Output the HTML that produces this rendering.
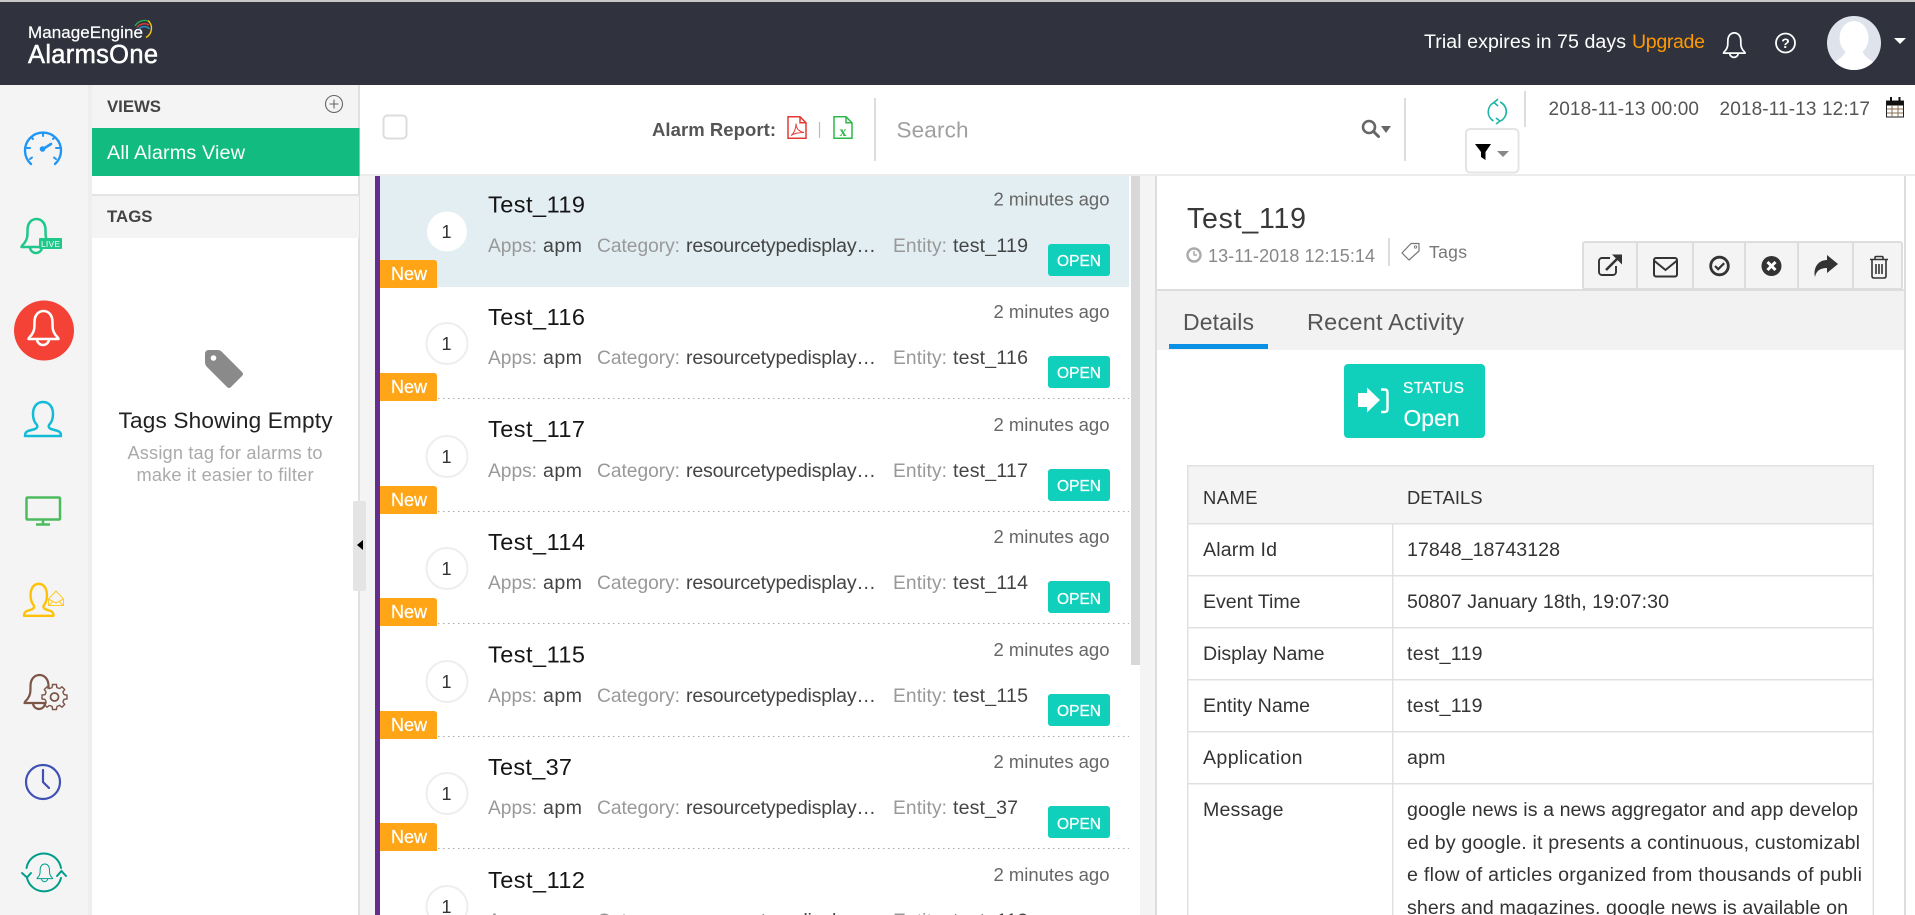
<!DOCTYPE html>
<html lang="en">
<head>
<meta charset="utf-8">
<title>AlarmsOne</title>
<style>
html,body{margin:0;padding:0;width:1915px;height:915px;overflow:hidden;background:#fff}
svg{display:block;font-family:"Liberation Sans",Arial,sans-serif}
.t{font-size:23.5px;fill:#151515}
.g{font-size:19.200px;fill:#999}
.v{font-size:19.600px;fill:#444}
.tm{font-size:18.500px;fill:#666}
.nw{font-size:18px;fill:#fff;stroke:#fff;stroke-width:.25px}
.op{font-size:15.500px;fill:#fff;stroke:#fff;stroke-width:.25px}
.n{font-size:18px;fill:#333}
.c{font-size:19.600px;fill:#333}
.h{font-size:18.400px;fill:#333}
</style>
</head>
<body>
<svg xmlns="http://www.w3.org/2000/svg" width="1915" height="915" viewBox="0 0 1915 915">
<clipPath id="av"><circle cx="1854" cy="43" r="27"/></clipPath>
<rect width="1915" height="915" fill="#fff"/>

<!-- header -->
<rect width="1915" height="2" fill="#c8c8c8"/>
<rect y="2" width="1915" height="83" fill="#30333d"/>
<text x="28" y="38" font-size="17" fill="#fff" stroke="#fff" stroke-width=".2" textLength="115">ManageEngine</text>
<text x="28" y="63" font-size="25.500" fill="#fff" stroke="#fff" stroke-width=".5" textLength="130">AlarmsOne</text>
<g fill="none" stroke-width="1.400">
<path d="M148 20.500A10.500 10.500 0 0 1 146 37.500" stroke="#f5c518"/>
<path d="M135 26A11 11 0 0 1 148 21" stroke="#2aa84a"/>
<path d="M137 27.500A9 9 0 0 1 149 25" stroke="#e03a3a"/>
<path d="M139 29A7 7 0 0 1 149.500 29" stroke="#2a8fc9"/>
</g>
<text x="1424" y="48" font-size="19.600" fill="#fff" textLength="202">Trial expires in 75 days</text>
<text x="1632" y="48" font-size="19.600" fill="#ff9800" textLength="73">Upgrade</text>
<g transform="translate(1703 -191) scale(.72)" fill="none" stroke="#fff" stroke-width="2.400" stroke-linejoin="round">
<path d="M28.500 339c0-1 1-2 3-4c3-4 3-7 3-13c0-7 4-11 9-11s9 4 9 11c0 6 0 9 3 13c2 2 3 3 3 4z"/>
<path d="M37 339a6 6 0 0 0 12 0"/>
</g>
<circle cx="1785.500" cy="43" r="9.500" fill="none" stroke="#fff" stroke-width="1.800"/>
<text x="1785.500" y="48" font-size="14" font-weight="bold" fill="#fff" text-anchor="middle">?</text>
<circle cx="1854" cy="43" r="27" fill="#dfe3ec"/>
<g clip-path="url(#av)" fill="#fff">
<ellipse cx="1854" cy="38" rx="14.500" ry="17"/>
<path d="M1826 72C1828 62 1843 61 1846 50L1862 50C1865 61 1880 62 1882 72Z"/>
</g>
<polygon points="1894,38 1906,38 1900,44" fill="#fff"/>

<!-- left rail -->
<rect y="85" width="88" height="830" fill="#f4f4f4"/>
<rect x="88" y="85" width="4" height="830" fill="#eee"/>

<!-- gauge -->
<g fill="none" stroke="#2196f3" stroke-width="2.400" stroke-linecap="round">
<path d="M31 164A18 18 0 1 1 55 164"/>
<path d="M43 133v3M31 137l2 2M55 137l-2 2M27 148h3M59 148h-3M30 159l2-1.500M56 159l-2-1.500" stroke-width="2"/>
<path d="M43 149L51 144" stroke-width="2.600"/>
<circle cx="42.500" cy="149" r="1.600" fill="#2196f3"/>
</g>

<!-- live bell -->
<g transform="translate(-7 -92)" fill="none" stroke="#1fc88a" stroke-width="2.500" stroke-linejoin="round">
<path d="M28.500 339c0-1 1-2 3-4c3-4 3-7 3-13c0-7 4-11 9-11s9 4 9 11c0 6 0 9 3 13c2 2 3 3 3 4z"/>
<path d="M37 339a6 6 0 0 0 12 0"/>
</g>
<rect x="39" y="238" width="23" height="11" rx="1" fill="#1fc88a"/>
<text x="41" y="247" font-size="8.500" fill="#fff" textLength="19">LIVE</text>

<!-- alarms -->
<circle cx="44" cy="330.500" r="30" fill="#f44336"/>
<g fill="none" stroke="#fff" stroke-width="2.500" stroke-linejoin="round">
<path d="M28.500 339c0-1 1-2 3-4c3-4 3-7 3-13c0-7 4-11 9-11s9 4 9 11c0 6 0 9 3 13c2 2 3 3 3 4z"/>
<path d="M37 339a6 6 0 0 0 12 0"/>
</g>

<!-- user -->
<path d="M43 402c-7 0-10 6-10 12c0 5 2 9 4 11c1 2 0 3-2 4l-7 2c-2 1-3 2-3 5h36c0-3-1-4-3-5l-7-2c-2-1-3-2-2-4c2-2 4-6 4-11c0-6-3-12-10-12z" fill="none" stroke="#12bcd8" stroke-width="2.500" stroke-linejoin="round"/>

<!-- monitor -->
<g fill="none" stroke="#4cbb5e" stroke-width="2.500">
<rect x="26.500" y="497.500" width="33.500" height="22" rx="1"/>
<path d="M43 519v6M36 524.500h14"/>
</g>

<!-- yellow user + mail -->
<path transform="translate(3.500 206) scale(.82 .94)" vector-effect="non-scaling-stroke" d="M43 402c-7 0-10 6-10 12c0 5 2 9 4 11c1 2 0 3-2 4l-7 2c-2 1-3 2-3 5h36c0-3-1-4-3-5l-7-2c-2-1-3-2-2-4c2-2 4-6 4-11c0-6-3-12-10-12z" fill="none" stroke="#ffc107" stroke-width="2.400" stroke-linejoin="round"/>
<g fill="none" stroke="#ffca28" stroke-width="1">
<path d="M48.500 599L56 591L63.500 599V605.500H48.500Z"/>
<path d="M48.500 599L56 603L63.500 599M48.500 605.500L53 601.500M63.500 605.500L59 601.500"/>
</g>

<!-- bell gear -->
<g transform="translate(-4 364)" fill="none" stroke="#7b5548" stroke-width="2.200" stroke-linejoin="round">
<path d="M28.500 339c0-1 1-2 3-4c3-4 3-7 3-13c0-7 4-11 9-11s9 4 9 11c0 6 0 9 3 13c2 2 3 3 3 4z"/>
<path d="M37 339a6 6 0 0 0 12 0"/>
</g>
<circle cx="54" cy="697" r="10" fill="#f4f4f4"/>
<g transform="translate(54.500 697)" fill="none" stroke="#7b5548" stroke-width="1.400" stroke-linejoin="round">
<path d="M-2.300 -9.500L-2 -12.500H2L2.300 -9.500L5.090 -8.340"/>
<path transform="rotate(45)" d="M-2.300 -9.500L-2 -12.500H2L2.300 -9.500L5.090 -8.340"/>
<path transform="rotate(90)" d="M-2.300 -9.500L-2 -12.500H2L2.300 -9.500L5.090 -8.340"/>
<path transform="rotate(135)" d="M-2.300 -9.500L-2 -12.500H2L2.300 -9.500L5.090 -8.340"/>
<path transform="rotate(180)" d="M-2.300 -9.500L-2 -12.500H2L2.300 -9.500L5.090 -8.340"/>
<path transform="rotate(225)" d="M-2.300 -9.500L-2 -12.500H2L2.300 -9.500L5.090 -8.340"/>
<path transform="rotate(270)" d="M-2.300 -9.500L-2 -12.500H2L2.300 -9.500L5.090 -8.340"/>
<path transform="rotate(315)" d="M-2.300 -9.500L-2 -12.500H2L2.300 -9.500L5.090 -8.340"/>
<circle r="4" stroke-width="1.800"/>
</g>

<!-- clock -->
<g fill="none" stroke="#3f51b5" stroke-width="2.200" stroke-linecap="round">
<circle cx="43" cy="782" r="17"/>
<path d="M43 770V782L49 788"/>
</g>

<!-- sync bell -->
<g fill="none" stroke="#009e8a" stroke-width="2" stroke-linecap="round">
<path d="M26.500 868A17.500 17.500 0 0 1 61 868"/>
<path d="M27 878A17.500 17.500 0 0 0 61 878"/>
<path d="M22 873L27 877.500L31 873M57 876L61.500 871L66 876"/>
</g>
<g transform="translate(22.200 702.300) scale(.52)" fill="none" stroke="#009e8a" stroke-width="1.900">
<path d="M28.500 339c0-1 1-2 3-4c3-4 3-7 3-13c0-7 4-11 9-11s9 4 9 11c0 6 0 9 3 13c2 2 3 3 3 4z"/>
<path d="M37 339a6 6 0 0 0 12 0"/>
</g>

<!-- gutter -->
<rect x="360" y="176" width="15" height="739" fill="#f4f4f4"/>
<rect x="375" y="176" width="5" height="739" fill="#662d91"/>

<!-- views panel -->
<rect x="92" y="85" width="267" height="43" fill="#f4f4f4"/>
<rect x="358" y="85" width="2" height="830" fill="#e0e0e0"/>
<rect x="92" y="128" width="267.500" height="48" fill="#12bc80"/>
<rect x="92" y="194" width="267" height="2" fill="#e4e4e4"/>
<rect x="92" y="196" width="267" height="42" fill="#f4f4f4"/>
<text x="107" y="112" font-size="16.800" font-weight="bold" fill="#444" textLength="54">VIEWS</text>
<text x="107" y="222" font-size="16.800" font-weight="bold" fill="#444" textLength="45.500">TAGS</text>
<text x="107" y="159" font-size="19.800" fill="#fff" textLength="138">All Alarms View</text>
<circle cx="334" cy="104" r="8.500" fill="none" stroke="#666" stroke-width="1.100"/>
<path d="M334 99.500v9M329.500 104h9" stroke="#666" stroke-width="1.100"/>
<path d="M209 350H218Q220 350 222 352L242 372Q244 374 242 376L231 387Q229 389 227 387L207 367Q205 365 205 362V354Q205 350 209 350Z" fill="#8a8a8a"/>
<circle cx="213.500" cy="358" r="2.800" fill="#fff"/>
<text x="225.500" y="428" font-size="22.600" fill="#222" text-anchor="middle" textLength="214">Tags Showing Empty</text>
<text x="225" y="459" font-size="18.200" fill="#aaa" text-anchor="middle" textLength="195">Assign tag for alarms to</text>
<text x="225" y="481" font-size="18.200" fill="#aaa" text-anchor="middle" textLength="177">make it easier to filter</text>
<rect x="353" y="501" width="13" height="90" rx="2" fill="#e4e4e4"/>
<polygon points="363,540 363,550 357,545" fill="#000"/>

<!-- toolbar -->
<rect x="360" y="174" width="1555" height="2" fill="#ececec"/>
<rect x="383.500" y="115.500" width="23" height="23" rx="4" fill="#fff" stroke="#ddd" stroke-width="2"/>
<text x="652" y="136" font-size="18.500" font-weight="bold" fill="#555" textLength="124">Alarm Report:</text>
<g fill="none" stroke="#e53935" stroke-width="1.500">
<path d="M788 116.800h12l6 6v15.500h-18z"/>
<path d="M800 116.800v6h6"/>
<path d="M791 135.500c3-2 5-7 5-12c0 5 3 8 8 9c-5 0-10 1-13 3z" stroke-width="1"/>
</g>
<path d="M819.500 122v16" stroke="#bbb" stroke-width="1.200"/>
<g fill="none" stroke="#2db84a" stroke-width="1.500">
<path d="M834 116.800h12l6 6v15.500h-18z"/>
<path d="M846 116.800v6h6"/>
</g>
<text x="843" y="136" font-size="14" font-family="Liberation Serif,serif" font-weight="bold" fill="#2db84a" text-anchor="middle">x</text>
<rect x="874" y="98" width="2" height="63" fill="#ddd"/>
<text x="896.500" y="137.500" font-size="22.500" fill="#a0a0a0" textLength="72">Search</text>
<circle cx="1369" cy="127" r="6" fill="none" stroke="#666" stroke-width="2.600"/>
<path d="M1373.500 131.500L1378.500 136.500" stroke="#666" stroke-width="3" stroke-linecap="round"/>
<polygon points="1381,126 1391,126 1386,133" fill="#666"/>
<rect x="1404" y="98" width="2" height="63" fill="#ddd"/>
<g fill="none" stroke="#1ab5a5" stroke-width="1.600">
<path d="M1494 102.500A10.500 10.500 0 0 0 1493.500 121"/>
<path d="M1500 102A10.500 10.500 0 0 1 1500.500 121"/>
<path d="M1498 99L1494 102.500L1498 106"/>
<path d="M1496 118L1500 121L1496 124"/>
</g>
<rect x="1524" y="91" width="2" height="36" fill="#ddd"/>
<text x="1548.500" y="115" font-size="19" fill="#555" textLength="150.500">2018-11-13 00:00</text>
<text x="1719.500" y="115" font-size="19" fill="#555" textLength="150.500">2018-11-13 12:17</text>
<rect x="1886.500" y="101" width="17" height="16" fill="#fff" stroke="#222" stroke-width="1"/>
<rect x="1886.500" y="101" width="17" height="4.500" fill="#111"/>
<path d="M1891 97v5M1899.500 97v5" stroke="#111" stroke-width="2"/>
<path d="M1892 105v12M1898 105v12M1887 109h16M1887 113h16" stroke="#8a6d50" stroke-width="1"/>
<rect x="1466" y="129" width="52.500" height="43.500" rx="4" fill="#fff" stroke="#e4e4e4" stroke-width="2"/>
<polygon points="1475,144 1491,144 1485.500,152 1485.500,160 1481,157 1481,152" fill="#000"/>
<polygon points="1497,151 1509,151 1503,157" fill="#888"/>

<!-- list -->
<rect x="380" y="176" width="749" height="111" fill="#e2eef2"/>
<rect x="1131" y="176" width="9" height="489" fill="#d8d8d8"/>
<rect x="1140" y="176" width="15" height="739" fill="#f4f4f4"/>

<g transform="translate(0 176)">
<circle cx="447" cy="55.500" r="20" fill="#fff"/>
<text class="n" x="446.500" y="62" text-anchor="middle">1</text>
<text class="t" x="488" y="36.500" textLength="97">Test_119</text>
<text class="tm" x="993.500" y="29.500" textLength="116">2 minutes ago</text>
<text class="g" x="488" y="76" textLength="49">Apps:</text><text class="v" x="543" y="76" textLength="39">apm</text>
<text class="g" x="597" y="76" textLength="83">Category:</text><text class="v" x="686" y="76" textLength="190">resourcetypedisplay…</text>
<text class="g" x="893" y="76" textLength="54">Entity:</text><text class="v" x="953" y="76" textLength="75">test_119</text>
<rect x="1048" y="68" width="62" height="32" rx="3" fill="#10d0bc"/>
<text class="op" x="1057" y="90" textLength="44">OPEN</text>
<path d="M380 84H434Q437 84 437 87V112H380Z" fill="#ffa516"/>
<text class="nw" x="391" y="104" textLength="36">New</text>
</g>

<g transform="translate(0 288)">
<circle cx="447" cy="55.500" r="20.500" fill="#fff" stroke="#eee" stroke-width="2"/>
<text class="n" x="446.500" y="62" text-anchor="middle">1</text>
<text class="t" x="488" y="37" textLength="97">Test_116</text>
<text class="tm" x="993.500" y="30" textLength="116">2 minutes ago</text>
<text class="g" x="488" y="76" textLength="49">Apps:</text><text class="v" x="543" y="76" textLength="39">apm</text>
<text class="g" x="597" y="76" textLength="83">Category:</text><text class="v" x="686" y="76" textLength="190">resourcetypedisplay…</text>
<text class="g" x="893" y="76" textLength="54">Entity:</text><text class="v" x="953" y="76" textLength="75">test_116</text>
<rect x="1048" y="68" width="62" height="32" rx="3" fill="#10d0bc"/>
<text class="op" x="1057" y="90" textLength="44">OPEN</text>
<path d="M438 110.500H1129" stroke="#aaa" stroke-width="1" stroke-dasharray="1.500 3.500"/>
<path d="M380 85H434Q437 85 437 88V113H380Z" fill="#ffa516"/>
<text class="nw" x="391" y="105" textLength="36">New</text>
</g>

<g transform="translate(0 401)">
<circle cx="447" cy="55.500" r="20.500" fill="#fff" stroke="#eee" stroke-width="2"/>
<text class="n" x="446.500" y="62" text-anchor="middle">1</text>
<text class="t" x="488" y="36" textLength="97">Test_117</text>
<text class="tm" x="993.500" y="30" textLength="116">2 minutes ago</text>
<text class="g" x="488" y="76" textLength="49">Apps:</text><text class="v" x="543" y="76" textLength="39">apm</text>
<text class="g" x="597" y="76" textLength="83">Category:</text><text class="v" x="686" y="76" textLength="190">resourcetypedisplay…</text>
<text class="g" x="893" y="76" textLength="54">Entity:</text><text class="v" x="953" y="76" textLength="75">test_117</text>
<rect x="1048" y="68" width="62" height="32" rx="3" fill="#10d0bc"/>
<text class="op" x="1057" y="90" textLength="44">OPEN</text>
<path d="M438 110.500H1129" stroke="#aaa" stroke-width="1" stroke-dasharray="1.500 3.500"/>
<path d="M380 85H434Q437 85 437 88V113H380Z" fill="#ffa516"/>
<text class="nw" x="391" y="105" textLength="36">New</text>
</g>

<g transform="translate(0 513)">
<circle cx="447" cy="55.500" r="20.500" fill="#fff" stroke="#eee" stroke-width="2"/>
<text class="n" x="446.500" y="62" text-anchor="middle">1</text>
<text class="t" x="488" y="37" textLength="97">Test_114</text>
<text class="tm" x="993.500" y="30" textLength="116">2 minutes ago</text>
<text class="g" x="488" y="76" textLength="49">Apps:</text><text class="v" x="543" y="76" textLength="39">apm</text>
<text class="g" x="597" y="76" textLength="83">Category:</text><text class="v" x="686" y="76" textLength="190">resourcetypedisplay…</text>
<text class="g" x="893" y="76" textLength="54">Entity:</text><text class="v" x="953" y="76" textLength="75">test_114</text>
<rect x="1048" y="68" width="62" height="32" rx="3" fill="#10d0bc"/>
<text class="op" x="1057" y="91" textLength="44">OPEN</text>
<path d="M438 110.500H1129" stroke="#aaa" stroke-width="1" stroke-dasharray="1.500 3.500"/>
<path d="M380 85H434Q437 85 437 88V113H380Z" fill="#ffa516"/>
<text class="nw" x="391" y="105" textLength="36">New</text>
</g>

<g transform="translate(0 626)">
<circle cx="447" cy="55.500" r="20.500" fill="#fff" stroke="#eee" stroke-width="2"/>
<text class="n" x="446.500" y="62" text-anchor="middle">1</text>
<text class="t" x="488" y="36.500" textLength="97">Test_115</text>
<text class="tm" x="993.500" y="30" textLength="116">2 minutes ago</text>
<text class="g" x="488" y="76" textLength="49">Apps:</text><text class="v" x="543" y="76" textLength="39">apm</text>
<text class="g" x="597" y="76" textLength="83">Category:</text><text class="v" x="686" y="76" textLength="190">resourcetypedisplay…</text>
<text class="g" x="893" y="76" textLength="54">Entity:</text><text class="v" x="953" y="76" textLength="75">test_115</text>
<rect x="1048" y="68" width="62" height="32" rx="3" fill="#10d0bc"/>
<text class="op" x="1057" y="90" textLength="44">OPEN</text>
<path d="M438 110.500H1129" stroke="#aaa" stroke-width="1" stroke-dasharray="1.500 3.500"/>
<path d="M380 85H434Q437 85 437 88V113H380Z" fill="#ffa516"/>
<text class="nw" x="391" y="105" textLength="36">New</text>
</g>

<g transform="translate(0 738)">
<circle cx="447" cy="55.500" r="20.500" fill="#fff" stroke="#eee" stroke-width="2"/>
<text class="n" x="446.500" y="62" text-anchor="middle">1</text>
<text class="t" x="488" y="37" textLength="84">Test_37</text>
<text class="tm" x="993.500" y="30" textLength="116">2 minutes ago</text>
<text class="g" x="488" y="76" textLength="49">Apps:</text><text class="v" x="543" y="76" textLength="39">apm</text>
<text class="g" x="597" y="76" textLength="83">Category:</text><text class="v" x="686" y="76" textLength="190">resourcetypedisplay…</text>
<text class="g" x="893" y="76" textLength="54">Entity:</text><text class="v" x="953" y="76" textLength="65">test_37</text>
<rect x="1048" y="68" width="62" height="32" rx="3" fill="#10d0bc"/>
<text class="op" x="1057" y="91" textLength="44">OPEN</text>
<path d="M438 110.500H1129" stroke="#aaa" stroke-width="1" stroke-dasharray="1.500 3.500"/>
<path d="M380 85H434Q437 85 437 88V113H380Z" fill="#ffa516"/>
<text class="nw" x="391" y="105" textLength="36">New</text>
</g>

<g transform="translate(0 851)">
<circle cx="447" cy="55.500" r="20.500" fill="#fff" stroke="#eee" stroke-width="2"/>
<text class="n" x="446.500" y="62" text-anchor="middle">1</text>
<text class="t" x="488" y="37" textLength="97">Test_112</text>
<text class="tm" x="993.500" y="30" textLength="116">2 minutes ago</text>
<text class="g" x="488" y="76" textLength="49">Apps:</text><text class="v" x="543" y="76" textLength="39">apm</text>
<text class="g" x="597" y="76" textLength="83">Category:</text><text class="v" x="686" y="76" textLength="190">resourcetypedisplay…</text>
<text class="g" x="893" y="76" textLength="54">Entity:</text><text class="v" x="953" y="76" textLength="75">test_112</text>
</g>

<!-- right panel -->
<rect x="1155" y="176" width="2" height="739" fill="#ddd"/>
<rect x="1904" y="176" width="2" height="739" fill="#ddd"/>
<rect x="1157" y="289" width="747" height="2" fill="#ddd"/>
<rect x="1157" y="291" width="747" height="59" fill="#f2f2f2"/>
<rect x="1169" y="344" width="99" height="5" fill="#0a90e4"/>
<text x="1187" y="228" font-size="28.500" fill="#383838" textLength="119">Test_119</text>
<circle cx="1194" cy="255" r="6.500" fill="none" stroke="#aaa" stroke-width="2.400"/>
<path d="M1194 251v4h3" fill="none" stroke="#aaa" stroke-width="1.500"/>
<text x="1208" y="262" font-size="18" fill="#888" textLength="167">13-11-2018 12:15:14</text>
<rect x="1388" y="238" width="2" height="28" fill="#ddd"/>
<path d="M1402 253L1411 243.500H1419V251L1409 260Z" fill="none" stroke="#777" stroke-width="1.200" stroke-linejoin="round"/>
<circle cx="1415.500" cy="247" r="1.200" fill="none" stroke="#777" stroke-width=".9"/>
<text x="1429" y="258" font-size="17.500" fill="#777" textLength="38">Tags</text>
<text x="1183" y="330" font-size="23" fill="#555" textLength="71">Details</text>
<text x="1307" y="330" font-size="23.500" fill="#555" textLength="157">Recent Activity</text>

<!-- action bar -->
<rect x="1583" y="242" width="319" height="47" rx="2" fill="#f4f4f4" stroke="#ddd" stroke-width="2"/>
<path d="M1637 242v47M1693 242v47M1745 242v47M1798 242v47M1853 242v47" stroke="#ddd" stroke-width="2"/>
<g fill="none" stroke="#333">
<path d="M1610 258h-8a3 3 0 0 0-3 3v11a3 3 0 0 0 3 3h11a3 3 0 0 0 3-3v-6" stroke-width="1.900"/>
<path d="M1606 270L1618 258" stroke-width="2.600"/>
<rect x="1654" y="258" width="23" height="18.500" rx="2" stroke-width="2"/>
<path d="M1654.500 261L1665.500 270L1676.500 261" stroke-width="2"/>
<circle cx="1719.500" cy="266" r="8.800" stroke-width="2.800"/>
<path d="M1715 266l3.200 3.200l6-6" stroke-width="2.200"/>
<path d="M1870 259.500h18M1875 259.500v-2q0-1 1-1h6q1 0 1 1v2" stroke-width="1.600"/>
<path d="M1872 260v16q0 2 2 2h10q2 0 2-2v-16M1876 264v10M1879 264v10M1882 264v10" stroke-width="1.600"/>
</g>
<polygon points="1612,254.500 1622,254.500 1622,264.500" fill="#333"/>
<circle cx="1771.500" cy="266" r="10" fill="#333"/>
<path d="M1767.500 262l8 8M1775.500 262l-8 8" stroke="#fff" stroke-width="3"/>
<path d="M1827 255L1838 264L1827 273V268C1820 268 1816 271 1815 277C1813 268 1818 260 1827 260Z" fill="#333"/>

<!-- status -->
<rect x="1344" y="364" width="141" height="74" rx="4" fill="#10d0bc"/>
<path d="M1358 393H1367V387.500L1380 400L1367 412.500V407H1358Z" fill="#fff"/>
<path d="M1381 389.500h3.500q3 0 3 3v16.500q0 3-3 3h-3.500" fill="none" stroke="#fff" stroke-width="2.400"/>
<text x="1403" y="393" font-size="15.500" fill="#fff" stroke="#fff" stroke-width=".2" textLength="61">STATUS</text>
<text x="1403.500" y="426" font-size="22.800" fill="#fff" stroke="#fff" stroke-width=".2" textLength="56">Open</text>

<!-- table -->
<rect x="1188" y="466" width="685" height="57" fill="#f4f4f4"/>
<g fill="#e0e0e0">
<rect x="1187" y="465" width="686" height="1.500"/>
<rect x="1187" y="465" width="1.500" height="450"/>
<rect x="1872.500" y="465" width="1.500" height="450"/>
<rect x="1392" y="523" width="1.500" height="392"/>
<rect x="1187" y="523" width="686" height="1.500"/>
<rect x="1187" y="575" width="686" height="1.500"/>
<rect x="1187" y="627" width="686" height="1.500"/>
<rect x="1187" y="679" width="686" height="1.500"/>
<rect x="1187" y="731" width="686" height="1.500"/>
<rect x="1187" y="783" width="686" height="1.500"/>
</g>
<text class="h" x="1203" y="504" textLength="54.500">NAME</text>
<text class="h" x="1407" y="504" textLength="75.500">DETAILS</text>
<text class="c" x="1203" y="556" textLength="74">Alarm Id</text>
<text class="c" x="1407" y="556" textLength="153">17848_18743128</text>
<text class="c" x="1203" y="608" textLength="97.500">Event Time</text>
<text class="c" x="1407" y="608" textLength="262">50807 January 18th, 19:07:30</text>
<text class="c" x="1203" y="660" textLength="121.500">Display Name</text>
<text class="c" x="1407" y="660" textLength="75.500">test_119</text>
<text class="c" x="1203" y="712" textLength="107">Entity Name</text>
<text class="c" x="1407" y="712" textLength="75.500">test_119</text>
<text class="c" x="1203" y="764" textLength="99.500">Application</text>
<text class="c" x="1407" y="764" textLength="38.500">apm</text>
<text class="c" x="1203" y="816" textLength="80.500">Message</text>
<text class="c" x="1407" y="816" textLength="451">google news is a news aggregator and app develop</text>
<text class="c" x="1407" y="849" textLength="453">ed by google. it presents a continuous, customizabl</text>
<text class="c" x="1407" y="881" textLength="455">e flow of articles organized from thousands of publi</text>
<text class="c" x="1407" y="914" textLength="441">shers and magazines. google news is available on</text>
</svg>
</body>
</html>
